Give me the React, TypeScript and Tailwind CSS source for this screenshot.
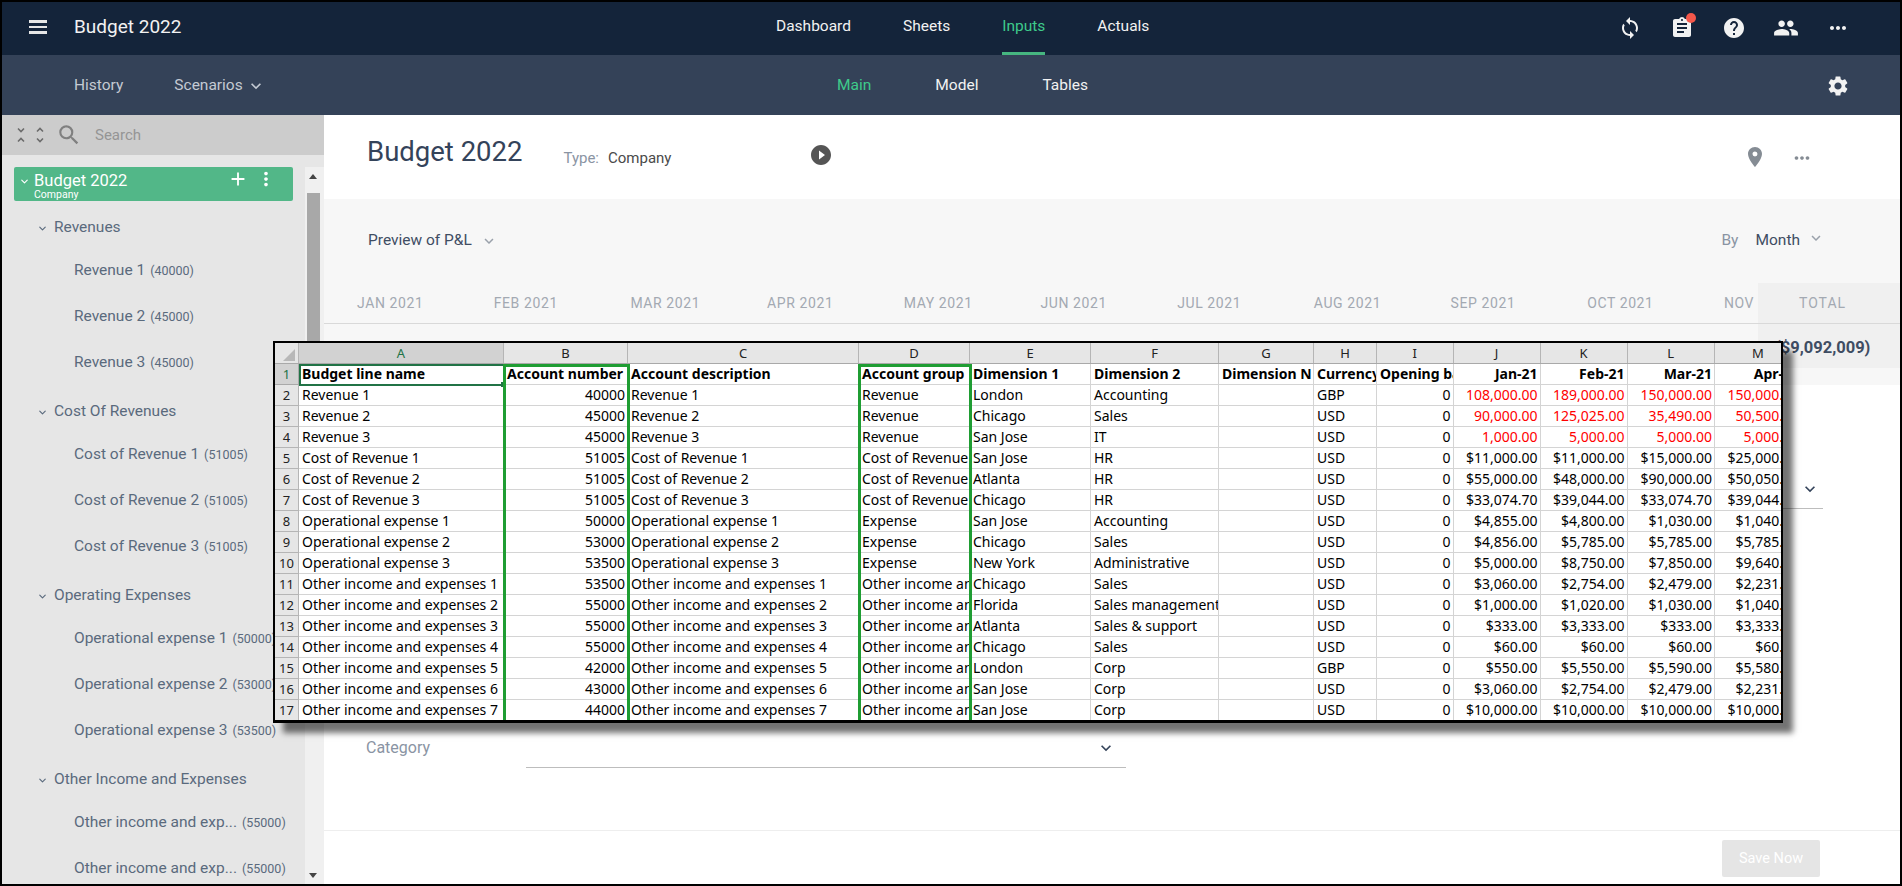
import React from "react";
import { MdSync, MdAssignment, MdHelp, MdPeople, MdMoreHoriz, MdSettings, MdPlace, MdPlayCircleFilled, MdAdd, MdMoreVert, MdSearch, MdKeyboardArrowDown } from "react-icons/md";
import { ChevronDown } from "lucide-react";

const cols = [205, 124, 231, 111, 121, 128, 95, 63, 76.5, 87, 87, 87.5, 87];
const colNames = ["A", "B", "C", "D", "E", "F", "G", "H", "I", "J", "K", "L", "M"];
const headers = ["Budget line name", "Account number", "Account description", "Account group", "Dimension 1", "Dimension 2", "Dimension N", "Currency", "Opening balance", "Jan-21", "Feb-21", "Mar-21", "Apr-21"];

type R = [string, string, string, string, string, string, string, string[]];
const rows: R[] = [
  ["Revenue 1", "40000", "Revenue 1", "Revenue", "London", "Accounting", "GBP", ["108,000.00", "189,000.00", "150,000.00", "150,000.00"]],
  ["Revenue 2", "45000", "Revenue 2", "Revenue", "Chicago", "Sales", "USD", ["90,000.00", "125,025.00", "35,490.00", "50,500.00"]],
  ["Revenue 3", "45000", "Revenue 3", "Revenue", "San Jose", "IT", "USD", ["1,000.00", "5,000.00", "5,000.00", "5,000.00"]],
  ["Cost of Revenue 1", "51005", "Cost of Revenue 1", "Cost of Revenue", "San Jose", "HR", "USD", ["$11,000.00", "$11,000.00", "$15,000.00", "$25,000.00"]],
  ["Cost of Revenue 2", "51005", "Cost of Revenue 2", "Cost of Revenue", "Atlanta", "HR", "USD", ["$55,000.00", "$48,000.00", "$90,000.00", "$50,050.00"]],
  ["Cost of Revenue 3", "51005", "Cost of Revenue 3", "Cost of Revenue", "Chicago", "HR", "USD", ["$33,074.70", "$39,044.00", "$33,074.70", "$39,044.00"]],
  ["Operational expense 1", "50000", "Operational expense 1", "Expense", "San Jose", "Accounting", "USD", ["$4,855.00", "$4,800.00", "$1,030.00", "$1,040.00"]],
  ["Operational expense 2", "53000", "Operational expense 2", "Expense", "Chicago", "Sales", "USD", ["$4,856.00", "$5,785.00", "$5,785.00", "$5,785.00"]],
  ["Operational expense 3", "53500", "Operational expense 3", "Expense", "New York", "Administrative", "USD", ["$5,000.00", "$8,750.00", "$7,850.00", "$9,640.00"]],
  ["Other income and expenses 1", "53500", "Other income and expenses 1", "Other income and expenses", "Chicago", "Sales", "USD", ["$3,060.00", "$2,754.00", "$2,479.00", "$2,231.00"]],
  ["Other income and expenses 2", "55000", "Other income and expenses 2", "Other income and expenses", "Florida", "Sales management", "USD", ["$1,000.00", "$1,020.00", "$1,030.00", "$1,040.00"]],
  ["Other income and expenses 3", "55000", "Other income and expenses 3", "Other income and expenses", "Atlanta", "Sales & support", "USD", ["$333.00", "$3,333.00", "$333.00", "$3,333.00"]],
  ["Other income and expenses 4", "55000", "Other income and expenses 4", "Other income and expenses", "Chicago", "Sales", "USD", ["$60.00", "$60.00", "$60.00", "$60.00"]],
  ["Other income and expenses 5", "42000", "Other income and expenses 5", "Other income and expenses", "London", "Corp", "GBP", ["$550.00", "$5,550.00", "$5,590.00", "$5,580.00"]],
  ["Other income and expenses 6", "43000", "Other income and expenses 6", "Other income and expenses", "San Jose", "Corp", "USD", ["$3,060.00", "$2,754.00", "$2,479.00", "$2,231.00"]],
  ["Other income and expenses 7", "44000", "Other income and expenses 7", "Other income and expenses", "San Jose", "Corp", "USD", ["$10,000.00", "$10,000.00", "$10,000.00", "$10,000.00"]],
];

function Cell({ w, right, bold, red, children }: { w: number; right?: boolean; bold?: boolean; red?: boolean; children?: React.ReactNode }) {
  return (
    <div
      style={{ width: w }}
      className={`shrink-0 h-[21px] leading-[20px] border-r border-b border-[#d4d4d4] overflow-hidden whitespace-nowrap ${right ? "text-right pr-[2px]" : "pl-[3px]"} ${bold ? "font-bold" : ""} ${red ? "text-[#ff0000]" : "text-black"}`}
    >
      {children}
    </div>
  );
}

function Excel() {
  return (
    <div className="absolute left-[271px] top-[339px] w-[1510px] h-[382px] border-[2px] border-b-[3px] border-black bg-white overflow-hidden shadow-[10px_10px_6px_rgba(0,0,0,0.55)] font-['Noto_Sans',sans-serif] text-[14px]">
      <div className="flex h-[21px] bg-[#e6e6e6] text-[#222] text-[13px] border-b border-[#a9a9a9]">
        <div className="w-[24px] shrink-0 border-r border-[#b5b5b5] relative">
          <div className="absolute right-[3px] bottom-[2px] w-0 h-0 border-l-[12px] border-l-transparent border-b-[12px] border-b-[#b8b8b8]" />
        </div>
        {colNames.map((c, i) => (
          <div key={c} style={{ width: cols[i] }} className={`shrink-0 text-center leading-[20px] border-r border-[#b5b5b5] ${i === 0 ? "bg-[#d2d2d2] text-[#217346]" : ""}`}>{c}</div>
        ))}
      </div>
      <div className="relative">
        <div className="flex">
          <div className="w-[24px] h-[21px] shrink-0 bg-[#d2d2d2] text-[#217346] text-[13px] text-center leading-[20px] border-r border-b border-[#a9a9a9]">1</div>
          {headers.map((h, i) => (
            <Cell key={h} w={cols[i]} bold right={i >= 9}>{h}</Cell>
          ))}
        </div>
        {rows.map((r, n) => (
          <div key={n} className="flex">
            <div className="w-[24px] h-[21px] shrink-0 bg-[#e6e6e6] text-[#222] text-[13px] text-center leading-[20px] border-r border-b border-[#b5b5b5]">{n + 2}</div>
            <Cell w={cols[0]}>{r[0]}</Cell>
            <Cell w={cols[1]} right>{r[1]}</Cell>
            <Cell w={cols[2]}>{r[2]}</Cell>
            <Cell w={cols[3]}>{r[3]}</Cell>
            <Cell w={cols[4]}>{r[4]}</Cell>
            <Cell w={cols[5]}>{r[5]}</Cell>
            <Cell w={cols[6]} />
            <Cell w={cols[7]}>{r[6]}</Cell>
            <Cell w={cols[8]} right>0</Cell>
            {r[7].map((v, i) => (
              <Cell key={i} w={cols[9 + i]} right red={n < 3}>{v}</Cell>
            ))}
          </div>
        ))}
        <div className="absolute left-[24px] top-0 w-[206px] h-[22px] border-2 border-[#217346]" />
        <div className="absolute left-[226px] top-[18px] w-[5px] h-[5px] bg-[#217346]" />
        <div className="absolute left-[228px] top-0 w-[127px] h-[360px] border-[3px] border-[#1f9d33]" />
        <div className="absolute left-[583px] top-0 w-[114px] h-[360px] border-[3px] border-[#1f9d33]" />
      </div>
    </div>
  );
}

const tree: { group: string; items: [string, string][] }[] = [
  { group: "Revenues", items: [["Revenue 1", "(40000)"], ["Revenue 2", "(45000)"], ["Revenue 3", "(45000)"]] },
  { group: "Cost Of Revenues", items: [["Cost of Revenue 1", "(51005)"], ["Cost of Revenue 2", "(51005)"], ["Cost of Revenue 3", "(51005)"]] },
  { group: "Operating Expenses", items: [["Operational expense 1", "(50000)"], ["Operational expense 2", "(53000)"], ["Operational expense 3", "(53500)"]] },
  { group: "Other Income and Expenses", items: [["Other income and exp...", "(55000)"], ["Other income and exp...", "(55000)"]] },
];

function CollapseIcon({ expand }: { expand?: boolean }) {
  return (
    <svg width="10" height="20" viewBox="0 0 10 20" fill="none" stroke="#6b6b6b" strokeWidth="1.6">
      {expand ? (
        <>
          <path d="M2 6.5 5 3.5 8 6.5" />
          <path d="M2 13.5 5 16.5 8 13.5" />
        </>
      ) : (
        <>
          <path d="M2 3.5 5 6.5 8 3.5" />
          <path d="M2 16.5 5 13.5 8 16.5" />
        </>
      )}
    </svg>
  );
}

function Sidebar() {
  return (
    <aside className="w-[322px] shrink-0 bg-[#e6e6e6] flex flex-col">
      <div className="h-[40px] shrink-0 bg-[#cccccc] flex items-center pl-[14px]">
        <CollapseIcon />
        <div className="ml-[9px]"><CollapseIcon expand /></div>
        <MdSearch className="ml-[11px] text-[#808080]" size={26} />
        <span className="ml-[13px] mt-[1px] text-[15px] text-[#959595]">Search</span>
      </div>
      <div className="h-[718px] mt-[12px] flex">
        <div className="w-[303px] pl-[12px] overflow-hidden">
          <div className="w-[279px] h-[34px] mb-[1px] bg-[#52b788] rounded-[2px] flex relative text-white">
            <ChevronDown size={11} strokeWidth={2.5} className="absolute left-[5px] top-[9px]" />
            <div className="pl-[20px] pt-[4px]">
              <div className="text-[16.5px] leading-[19px]">Budget 2022</div>
              <div className="text-[10.5px] leading-[10px]">Company</div>
            </div>
            <MdAdd size={22} className="absolute left-[213px] top-[1px]" />
            <MdMoreVert size={22} className="absolute left-[241px] top-[1px]" />
          </div>
          {tree.map((g) => (
            <div key={g.group}>
              <div className="h-[46px] pt-[6px] flex items-center text-[15.5px] text-[#5a6a7d]">
                <ChevronDown size={11} strokeWidth={2.5} className="ml-[23px] mr-[6px] shrink-0" />
                {g.group}
              </div>
              {g.items.map(([n, c], i) => (
                <div key={i} className="h-[46px] flex items-center pl-[60px] text-[#5a6a7d] whitespace-nowrap">
                  <span className="text-[15.5px]">{n}</span>
                  <span className="text-[12.5px] ml-[5px]">{c}</span>
                </div>
              ))}
            </div>
          ))}
        </div>
        <div className="w-[19px] bg-[#f0f0f0] relative">
          <div className="absolute left-[4px] top-[7px] w-0 h-0 border-x-[4px] border-x-transparent border-b-[5px] border-b-[#444]" />
          <div className="ml-[2px] mt-[26px] w-[13px] h-[500px] bg-[#a8a8a8]" />
          <div className="absolute left-[4px] bottom-[7px] w-0 h-0 border-x-[4px] border-x-transparent border-t-[5px] border-t-[#444]" />
        </div>
      </div>
    </aside>
  );
}

const months = ["JAN 2021", "FEB 2021", "MAR 2021", "APR 2021", "MAY 2021", "JUN 2021", "JUL 2021", "AUG 2021", "SEP 2021", "OCT 2021", "NOV 2021"];

function MainBody() {
  return (
    <main className="flex-1 min-w-0 bg-white flex flex-col text-[#34435a]">
      <div className="h-[84px] shrink-0 flex items-start">
        <h1 className="ml-[43px] mt-[17px] text-[27.5px] leading-[40px] font-normal">Budget 2022</h1>
        <span className="ml-[41px] mt-[33px] text-[15px] leading-[20px] text-[#8a94a3]">Type:</span>
        <span className="ml-[9px] mt-[33px] text-[15px] leading-[20px] text-[#4a4a4a]">Company</span>
        <MdPlayCircleFilled size={24} className="ml-[138px] mt-[28px] text-[#555]" />
        <MdPlace size={24} className="ml-auto mt-[30px] text-[#858c94]" />
        <MdMoreHoriz size={22} className="ml-[24px] mr-[87px] mt-[32px] text-[#858c94]" />
      </div>
      <div className="h-[186px] shrink-0 bg-[#f7f7f7] flex flex-col">
        <div className="h-[84px] shrink-0 flex items-center text-[15.5px]">
          <span className="ml-[44px] text-[#3f4d63]">Preview of P&amp;L</span>
          <MdKeyboardArrowDown size={18} className="ml-[8px] text-[#9aa1ab]" />
          <span className="ml-auto text-[#8a94a3]">By</span>
          <span className="ml-[17px] text-[#3f4d63]">Month</span>
          <MdKeyboardArrowDown size={18} className="ml-[7px] mr-[75px] mb-[6px] text-[#9aa1ab]" />
        </div>
        <div className="flex">
          <div className="flex-1 min-w-0 overflow-hidden">
            <div className="h-[41px] flex items-center border-b border-[#d9d9d9] pl-[33px] whitespace-nowrap">
              {months.map((m) => (
                <span key={m} className="w-[136.7px] shrink-0 text-[14px] tracking-[0.6px] text-[#a3a9b2]">{m}</span>
              ))}
            </div>
          </div>
          <div className="w-[142px] shrink-0 bg-[#f0f0f0] h-[85px] flex flex-col">
            <div className="h-[41px] shrink-0 border-b border-[#d9d9d9] flex items-center pl-[41px] text-[14px] tracking-[1px] text-[#a3a9b2]">TOTAL</div>
            <div className="flex-1 flex items-center pl-[17px] pt-[4px] text-[16.5px] font-bold text-[#3f4d63] whitespace-nowrap">($9,092,009)</div>
          </div>
        </div>
      </div>
      <div className="h-[124px] shrink-0 flex items-end justify-end pr-[77px]">
        <div className="w-[600px] border-b border-[#bdbdbd] h-[40px] flex items-center justify-end pr-[3px]">
          <MdKeyboardArrowDown size={20} />
        </div>
      </div>
      <div className="h-[259px] shrink-0 flex items-end pl-[42px]">
        <div className="h-[40px] w-[160px] shrink-0 flex items-center text-[16px] text-[#8a94a3]">Category</div>
        <div className="h-[40px] w-[600px] shrink-0 border-b border-[#bdbdbd] flex items-center justify-end pr-[10px]">
          <MdKeyboardArrowDown size={20} />
        </div>
      </div>
      <div className="flex-1 mt-[62px] border-t border-[#eeeeee] flex items-start justify-end pt-[9px] pr-[80px]">
        <div className="w-[98px] h-[37px] bg-[#e5e5e5] rounded-[2px] flex items-center justify-center text-[14.5px] text-white">Save Now</div>
      </div>
    </main>
  );
}

export default function App() {
  return (
    <div className="w-[1902px] h-[886px] border-2 border-black relative overflow-hidden bg-white flex flex-col font-['Roboto',sans-serif]">
      <header className="h-[53px] shrink-0 bg-[#14243a] flex items-center text-[#f2f2f2] text-[15.5px]">
        <div className="w-[774px] shrink-0 flex items-center pb-[3px]">
          <div className="ml-[27px] w-[18px] flex flex-col gap-[3px]">
            <div className="h-[2.5px] bg-[#e6e6e6]" />
            <div className="h-[2.5px] bg-[#e6e6e6]" />
            <div className="h-[2.5px] bg-[#e6e6e6]" />
          </div>
          <span className="ml-[27px] text-[19px]">Budget 2022</span>
        </div>
        <nav className="flex gap-[52px] self-stretch items-center">
          <span className="pb-[4px]">Dashboard</span>
          <span className="pb-[4px]">Sheets</span>
          <span className="relative text-[#3ecb8b] self-stretch flex items-center pb-[4px]">
            Inputs
            <span className="absolute left-0 right-0 bottom-0 h-[3px] bg-[#46b680]" />
          </span>
          <span className="pb-[4px]">Actuals</span>
        </nav>
        <div className="ml-auto flex items-center pr-[36px] pb-[2px]">
          <span className="w-[52px] flex justify-center"><MdSync size={24} /></span>
          <span className="w-[52px] flex justify-center">
            <span className="relative">
              <MdAssignment size={24} />
              <span className="absolute -right-[2px] -top-[3px] w-[10px] h-[10px] rounded-full bg-[#f4574a]" />
            </span>
          </span>
          <span className="w-[52px] flex justify-center"><MdHelp size={24} /></span>
          <span className="w-[52px] flex justify-center"><MdPeople size={26} /></span>
          <span className="w-[52px] flex justify-center"><MdMoreHoriz size={24} /></span>
        </div>
      </header>
      <div className="h-[60px] shrink-0 bg-[#344258] flex items-center text-[15.5px] pt-[1px]">
        <div className="w-[835px] shrink-0 flex items-center text-[#c4cad3]">
          <span className="ml-[72px]">History</span>
          <span className="ml-[51px]">Scenarios</span>
          <MdKeyboardArrowDown size={20} className="ml-[3px]" />
        </div>
        <nav className="flex gap-[64px] text-[#f2f2f2]">
          <span className="text-[#3ecb8b]">Main</span>
          <span>Model</span>
          <span>Tables</span>
        </nav>
        <MdSettings size={24} className="ml-auto mr-[50px] text-[#f2f2f2]" />
      </div>
      <div className="flex-1 min-h-0 flex">
        <Sidebar />
        <MainBody />
      </div>
      <Excel />
    </div>
  );
}
